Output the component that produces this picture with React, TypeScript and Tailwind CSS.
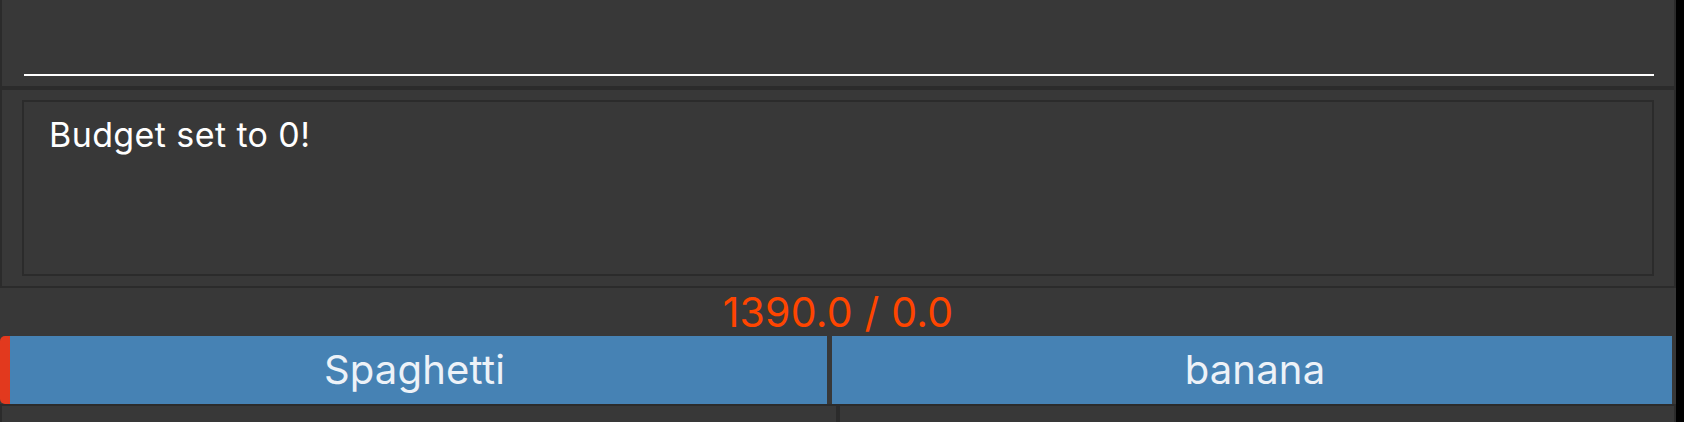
import React from "react";

export default function App() {
  return (
    <div className="w-[1684px] h-[422px] bg-black flex overflow-hidden" style={{ fontFamily: "Inter, 'Noto Sans', sans-serif" }}>
      <div className="w-[1676px] h-full bg-[#383838] flex flex-col">
        {/* top panel */}
        <div className="h-[86px] border-x-2 border-[#2b2b2b] flex items-end pl-[22px] pr-[20px] pb-[10px]">
          <div className="h-[2px] w-full bg-white" />
        </div>
        <div className="h-[4px] bg-[#2b2b2b]" />
        {/* message panel */}
        <div className="h-[196px] border-x-2 border-[#2b2b2b] px-[20px] py-[10px] flex">
          <div className="flex-1 border-2 border-[#2b2b2b] pl-[25px] pt-[16px]">
            <div className="text-[34px] leading-[34px] tracking-[0.4px] text-white">Budget set to 0!</div>
          </div>
        </div>
        <div className="h-[2px] bg-[#2b2b2b]" />
        {/* total */}
        <div className="h-[48px] flex items-center justify-center">
          <span className="text-[41px] leading-[48px] tracking-[0.2px] text-[#ff4500]">1390.0 / 0.0</span>
        </div>
        {/* buttons */}
        <div className="h-[68px] flex gap-[5px] pr-[4px]">
          <div className="w-[827px] bg-[#4682b4] border-l-[10px] border-[#e2391e] rounded-l-[5px] flex items-center justify-center">
            <span className="text-[40px] leading-none tracking-[0.2px] text-[#edf2f8] -ml-[8px]">Spaghetti</span>
          </div>
          <div className="flex-1 bg-[#4682b4] flex items-center justify-center">
            <span className="text-[40px] leading-none tracking-[0.2px] text-[#edf2f8] ml-[6px]">banana</span>
          </div>
        </div>
        <div className="h-[2px] bg-[#2b2b2b]" />
        {/* lower panels */}
        <div className="flex-1 flex">
          <div className="w-[836px] border-l-2 border-[#2b2b2b]" />
          <div className="w-[4px] bg-[#2b2b2b]" />
          <div className="flex-1 border-r-2 border-[#2b2b2b]" />
        </div>
      </div>
    </div>
  );
}
